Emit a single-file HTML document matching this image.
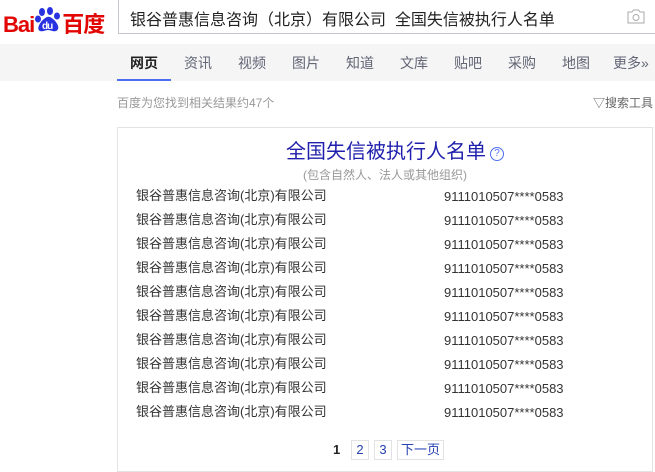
<!DOCTYPE html>
<html><head><meta charset="utf-8"><style>
*{margin:0;padding:0;box-sizing:border-box}
body{width:655px;height:463px;overflow:hidden;background:#fff;font-family:"Liberation Sans","Noto Sans CJK SC",sans-serif;position:relative;color:#333}
.abs{position:absolute;white-space:nowrap}
.logo{left:3px;top:7px;font-size:22px;font-weight:bold;color:#e10601;letter-spacing:-1px}
.search{left:118px;top:0;width:545px;height:34px;border:1px solid #c4c7ce;border-top:none;font-size:16px;color:#222;padding:6px 0 0 11px}
.nav{left:0;top:44px;width:655px;height:37px;background:#f5f5f6}
.tab{top:53px;font-size:14px;color:#626675}
.ul{left:117px;top:79px;width:54px;height:2px;background:#4e6ef2}
.card{left:117px;top:127px;width:536px;height:345px;border:1px solid #e3e3e3}
.row{font-size:13px;color:#333;line-height:16px}
.code{font-family:"Liberation Sans",sans-serif}
.pg{top:440px;height:20px;border:1px solid #e1e2e3;font-size:13px;color:#2440b3;text-align:center;line-height:18px}
</style></head><body>
<div class="abs logo">Bai<span style="display:inline-block;width:28px;height:22px;vertical-align:-3px;position:relative"><svg width="28" height="26" viewBox="0 0 28 26" style="position:absolute;top:-6px"><ellipse cx="8" cy="5" rx="3" ry="4" fill="#2932e1"/><ellipse cx="16" cy="4" rx="3" ry="4" fill="#2932e1"/><ellipse cx="23" cy="9" rx="3" ry="3.5" fill="#2932e1"/><ellipse cx="4" cy="12" rx="3" ry="3.5" fill="#2932e1"/><path d="M6 24c-4-2 0-9 4-12c3-3 6-3 9 0c4 3 8 10 3 12c-3 1-5-1-8-1s-5 2-8 1z" fill="#2932e1"/><text x="8" y="22" font-size="10" fill="#fff" font-family="Liberation Sans">du</text></svg></span>百度</div>
<div class="abs search">银谷普惠信息咨询（北京）有限公司&nbsp; 全国失信被执行人名单</div>
<svg class="abs" style="left:627px;top:9px" width="18" height="15" viewBox="0 0 18 15"><path d="M1 3h4l1.5-2h5L13 3h4v11H1z" fill="none" stroke="#aaa"/><circle cx="9" cy="8.5" r="3" fill="none" stroke="#aaa"/></svg>
<div class="abs nav"></div>
<div class="abs tab" style="left:130px;color:#222;font-weight:bold">网页</div>
<div class="abs tab" style="left:184px">资讯</div>
<div class="abs tab" style="left:238px">视频</div>
<div class="abs tab" style="left:292px">图片</div>
<div class="abs tab" style="left:346px">知道</div>
<div class="abs tab" style="left:400px">文库</div>
<div class="abs tab" style="left:454px">贴吧</div>
<div class="abs tab" style="left:508px">采购</div>
<div class="abs tab" style="left:562px">地图</div>
<div class="abs tab" style="left:613px">更多»</div>
<div class="abs ul"></div>
<div class="abs" style="left:117px;top:94px;font-size:12px;color:#999">百度为您找到相关结果约47个</div>
<div class="abs" style="left:593px;top:94px;font-size:12px;color:#666">▽搜索工具</div>
<div class="abs card"></div>
<div class="abs" style="left:286px;top:138px;font-size:20px;color:#1f1fad;line-height:28px">全国失信被执行人名单</div>
<div class="abs" style="left:490px;top:147px;width:14px;height:14px;border:1px solid #4e6ef2;border-radius:50%;font-size:10px;color:#4e6ef2;text-align:center;line-height:12px">?</div>
<div class="abs" style="left:303px;top:167px;font-size:12px;color:#999;line-height:16px">(包含自然人、法人或其他组织)</div>
<div id="rows"></div>
<div class="abs" style="left:333px;top:442px;font-size:13px;font-weight:bold;color:#222">1</div>
<div class="abs pg" style="left:351px;width:18px">2</div>
<div class="abs pg" style="left:374px;width:18px">3</div>
<div class="abs pg" style="left:397px;width:47px">下一页</div>
<script>
var h='';for(var i=0;i<10;i++){var t=188+i*24;h+='<div class="abs row" style="left:136px;top:'+t+'px">银谷普惠信息咨询(北京)有限公司</div><div class="abs row code" style="left:444px;top:'+(t+1)+'px">9111010507****0583</div>';}
document.getElementById('rows').innerHTML=h;
</script>
</body></html>
